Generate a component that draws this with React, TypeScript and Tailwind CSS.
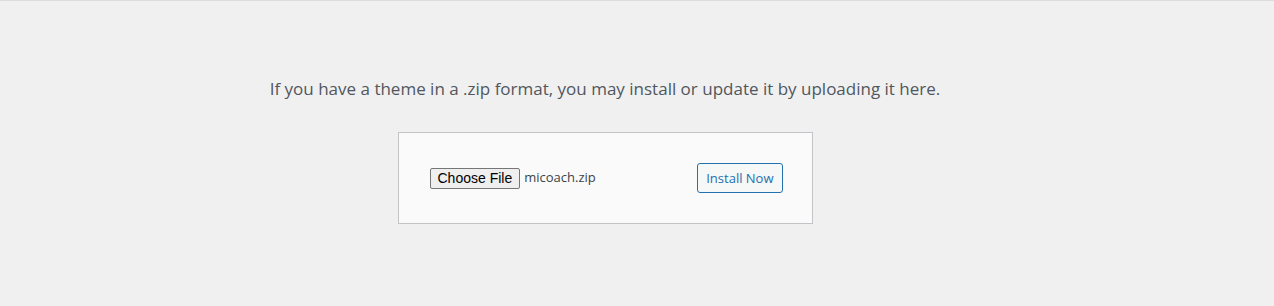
export default function App() {
  return (
    <div className="h-[306px] w-full border-t border-[#dcdcde] bg-[#f0f0f1] font-['Segoe_UI','Open_Sans',sans-serif]">
      <div className="flex flex-col items-center pr-[64px] pt-[76px]">
        <p className="text-[17px] leading-[24px] text-[#50575e]">
          If you have a theme in a .zip format, you may install or update it by uploading it here.
        </p>

        <form className="mt-[31px] flex h-[92px] w-[415px] items-center justify-between border border-[#c3c4c7] bg-[#fafafa] pl-[31px] pr-[29px]">
          <div className="flex items-center gap-[4px]">
            <button
              type="button"
              className="h-[21px] rounded-[2px] border border-[#767676] bg-[#efefef] px-[7px] font-['Liberation_Sans',Arial,sans-serif] text-[14px] leading-[19px] text-black"
            >
              Choose File
            </button>
            <span className="text-[13px] text-[#3c434a]">micoach.zip</span>
          </div>

          <button
            type="button"
            className="h-[30px] rounded-[3px] border border-[#2271b1] bg-[#f6f7f7] px-[8px] text-[13px] leading-[28px] text-[#2271b1]"
          >
            Install Now
          </button>
        </form>
      </div>
    </div>
  );
}
